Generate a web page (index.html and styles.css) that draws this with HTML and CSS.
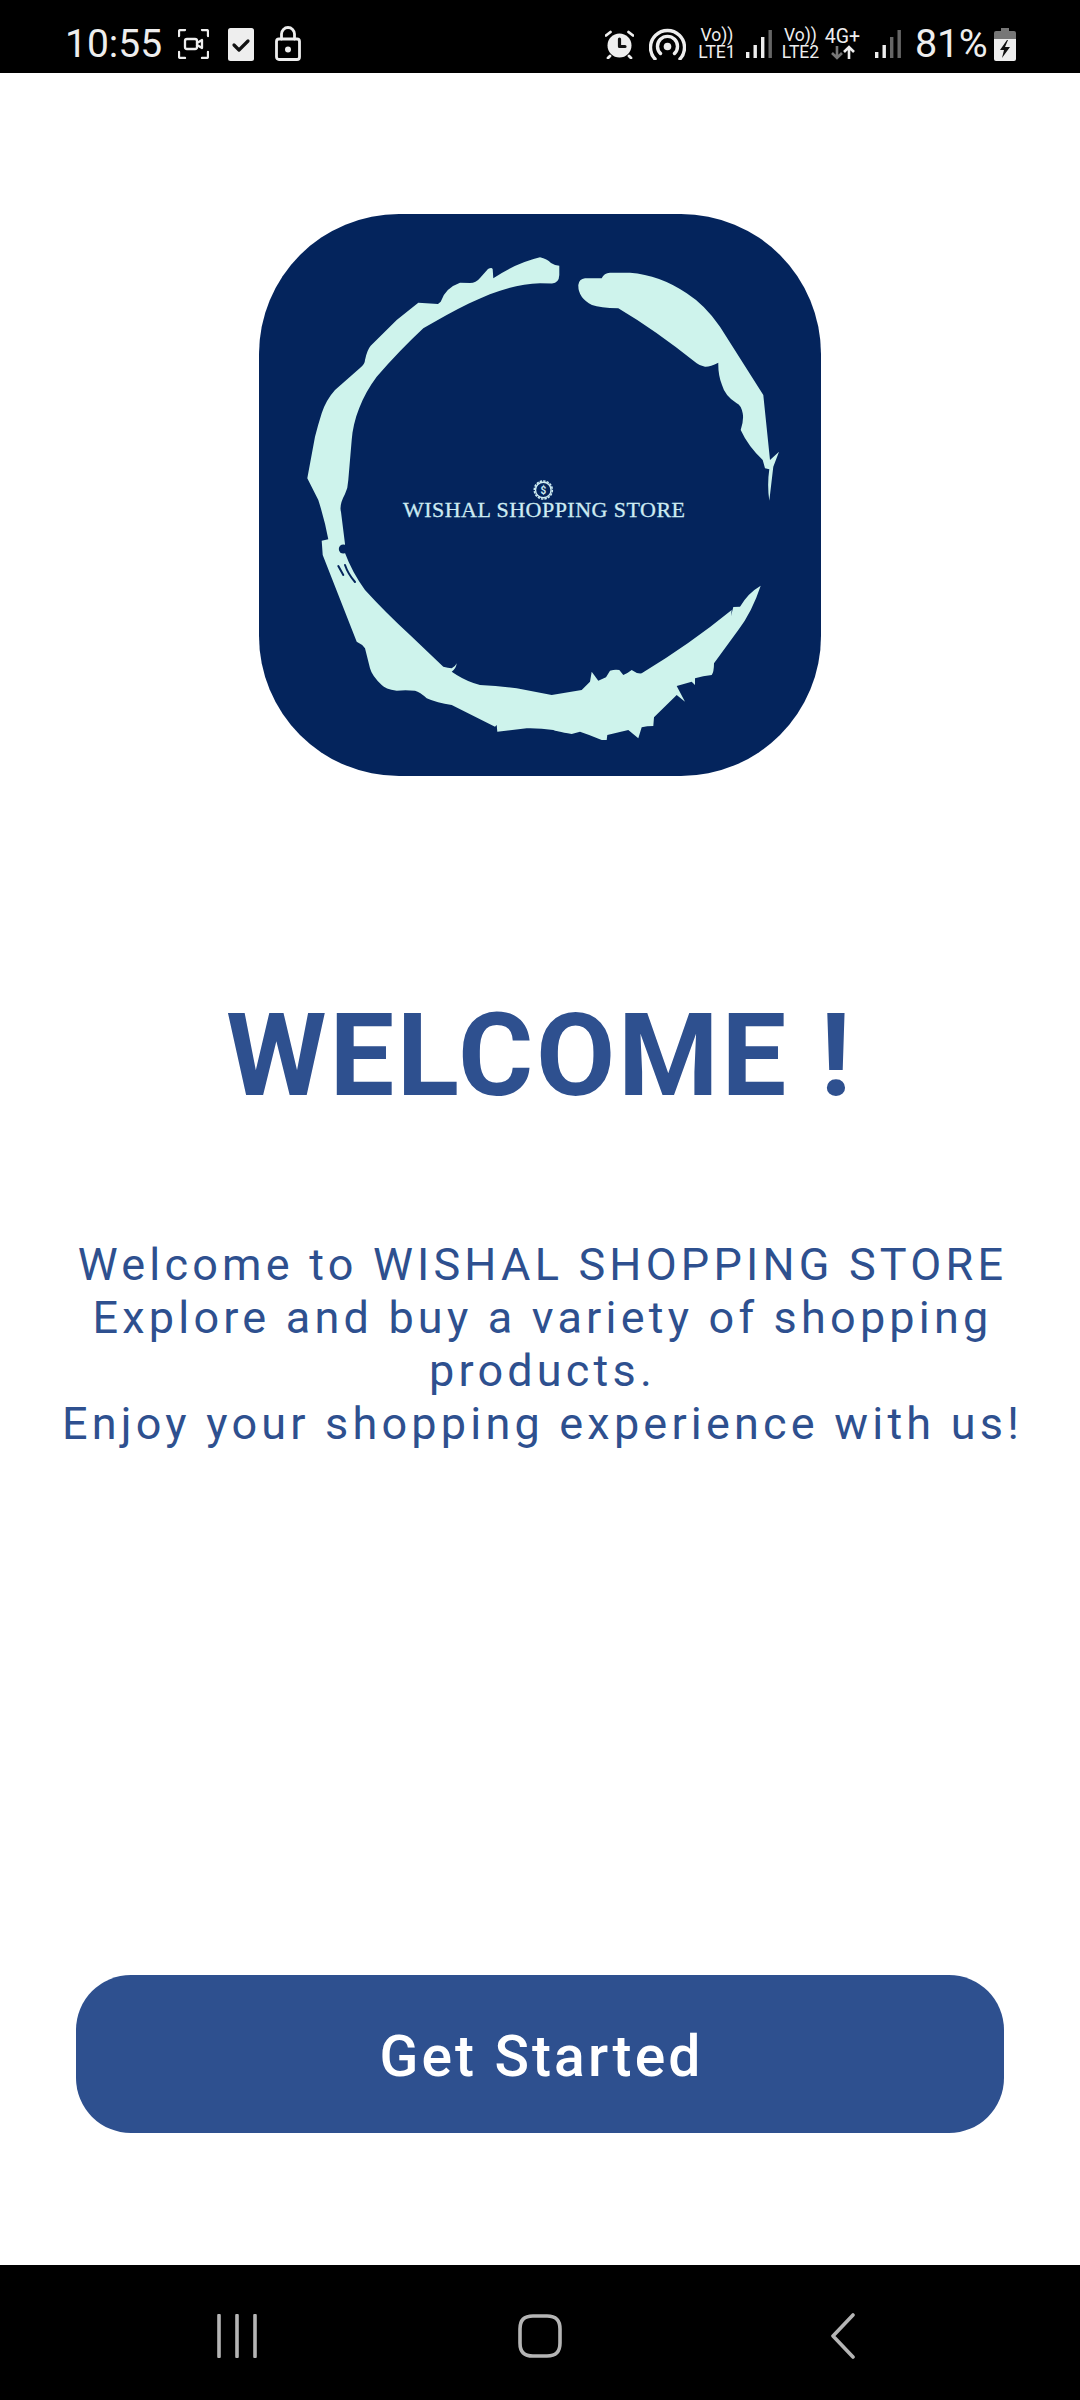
FILE: index.html
```html
<!DOCTYPE html>
<html lang="en">
<head>
<meta charset="utf-8">
<title>Wishal Shopping Store</title>
<link rel="stylesheet" href="styles.css">
</head>
<body>
<div class="screen">
  <header class="status">
    <span class="time">10:55</span>
    <svg class="ic ic-capture" viewBox="0 0 31 30"><path d="M1 7V2.500Q1 1 2.500 1H7M24 1h4.500Q30 1 30 2.500V7M30 23v4.500Q30 29 28.500 29H24M7 29H2.500Q1 29 1 27.500V23" /><rect x="7" y="10" width="12" height="10" rx="2"/><path d="M19 14l5-3v8l-5-3"/></svg>
    <svg class="ic ic-check" viewBox="0 0 26 33"><rect class="fill" width="26" height="33" rx="2.500"/><path class="dark" d="M6 17l5 5 9-9"/></svg>
    <svg class="ic ic-lock" viewBox="0 0 26 35"><rect x="1.500" y="13" width="23" height="20.500" rx="2.500"/><path d="M6.500 13V8a6.500 6.500 0 0 1 13 0v5"/><circle class="fill" cx="13" cy="23.500" r="3"/></svg>
    <svg class="ic ic-alarm" viewBox="0 0 29 29"><circle class="fill" cx="14.500" cy="15.500" r="12"/><path d="M1 5.500L5.500 2M28 5.500L23.500 2M5 26l-2 2M24 26l2 2"/><path class="dark" d="M14.500 9v7.500H20"/></svg>
    <svg class="ic ic-hotspot" viewBox="0 0 37 32"><path d="M6 31A17 17 0 1 1 31 31M11.500 25.500A10 10 0 1 1 25.500 25.500"/><circle class="fill" cx="18.500" cy="18.500" r="3.800"/></svg>
    <div class="net net-1"><span>Vo))</span><span>LTE1</span></div>
    <svg class="ic ic-signal sig-1" viewBox="0 0 27 29"><rect class="fill" x="1" y="22" width="3.400" height="6"/><rect class="fill" x="8.500" y="15" width="3.400" height="13"/><rect class="fill" x="16" y="7" width="3.400" height="21"/><rect class="dim" x="23.500" y="0" width="3.400" height="28"/></svg>
    <div class="net net-2"><span>Vo))</span><span>LTE2</span></div>
    <div class="net net-3"><span class="net-4g">4G+</span>
      <svg class="arrows" viewBox="0 0 30 15"><path class="down" d="M9 1v12M4 8l5 5 5-5"/><path class="up" d="M21 14V2M16 7l5-5 5 5"/></svg>
    </div>
    <svg class="ic ic-signal sig-2" viewBox="0 0 27 29"><rect class="fill" x="1" y="22" width="3.400" height="6"/><rect class="fill" x="8.500" y="15" width="3.400" height="13"/><rect class="dim" x="16" y="7" width="3.400" height="21"/><rect class="dim" x="23.500" y="0" width="3.400" height="28"/></svg>
    <span class="pct">81%</span>
    <svg class="ic ic-batt" viewBox="0 0 22 33"><path class="dim2" d="M7 0h8v3h5q2 0 2 2v7H0V5q0-2 2-2h5z"/><path class="fill" d="M0 11h22v20q0 2-2 2H2q-2 0-2-2z"/><path class="darkfill" d="M13 12L6 22h4l-2 8 8-11h-5l3-7z"/></svg>
  </header>

  <main class="main">
    <svg class="logo" viewBox="259 214 562 562">
      <rect class="logo-bg" x="259" y="214" width="562" height="562" rx="140"/>
      <path class="ring" d="M540 257.300Q547 259 551 263Q555 265.500 559.300 265.700L559.300 275Q559 283 552 283.400L540 283.300C505 284 468 302 423.300 328.300Q400 350 376.700 376.700C362 396 353 420 351.700 440L348.300 480Q348 488 345 494Q339 505 341 512L345 544L345 553Q352 572 365 590Q385 612 410 635L443.300 666.700Q448 668 451.700 668.300Q455 667 456.700 663.300Q456 669 451.700 671.700L456.700 675Q468 682 480 685Q500 686 516.700 688.300L551.700 695L581.700 690L590 681.700L591.700 671.700L598.300 680.700L606 677.300L610 670.700Q615 669 619.300 670L623.300 675Q628 673 631.700 670Q637 674 641.700 673.300Q690 644 731.700 610L731 616L733.300 607L740 606.700Q748 593 760.700 585.700Q752 612 738.300 630L714 663.300Q714 672 711.700 675Q703 676 695 678.300L695 685L691.700 681.700L676.700 686L685 701.700L676.700 695L654 717.300L653.300 726Q647 726 641.700 727.300L638.300 738.300L628.300 730L607.300 735L606.700 740L601.700 740Q590 735 580 731.700L571.700 734Q555 731 553.300 730Q540 728 526.700 728.300L497.300 731.700L496.700 725L495 726.700L451.700 705Q437 703 426.700 698.300Q420 692 415 690.700Q405 690 396.700 690.700Q385 689 381.700 685Q372 676 370 668.300L365 648.300Q362 644 356.700 641.700L322.700 555L321.700 540.700L328.300 539.300Q325 521 318.300 500L307.300 478.300L315 436.700Q318 425 321.700 413.300Q326 400 335 390L360 368Q365 364 365 360Q367 350 370.700 345.700L396.700 320L418.300 302.700L438 304L440.700 301.700Q445 288 460 282.700L470 283Q476 283 480 278L488 269Q492 267 492.700 269.300L493.300 278.300Q516 263 540 257.300Z"/>
      <path class="ring" d="M578.300 285Q579 279 585 278.300L601.700 278.300Q604 273 610 272.700L630 272.700Q660 275 686.700 293.300Q705 305 720 326.700L763.300 395L770 460L779 451.700L773.300 466.700L769.300 500.700Q767 485 769.300 469.300L765 468.300L762.700 460Q748 446 740.700 430Q744 420 742.700 413.300Q741 405 736.700 403.300Q725 396 722 385Q718 375 718.300 362.700Q710 367 705 366.700Q700 366 696.700 363.300Q655 330 618.300 308.300Q600 308 592 305Q578 298 578.300 285Z"/>
      <circle class="logo-bg" cx="343.300" cy="549" r="4.500"/>
      <path class="nick" d="M338.300 566l5 9M345 565q3 9 10 17"/>
      <circle class="coin-edge" cx="543.300" cy="490" r="9"/>
      <circle class="coin" cx="543.300" cy="490" r="7.800"/>
      <text class="coin-t" x="543.300" y="493.500">$</text>
      <text class="logo-t" x="544" y="517" textLength="282">WISHAL SHOPPING STORE</text>
    </svg>

    <h1 class="title">WELCOME !</h1>

    <p class="intro">Welcome to WISHAL SHOPPING STORE<br>Explore and buy a variety of shopping products.<br>Enjoy your shopping experience with us!</p>

    <button class="cta" type="button">Get Started</button>
  </main>

  <nav class="nav">
    <svg class="nav-recent" viewBox="0 0 40 44"><path d="M2 1.500v41M20 1.500v41M38 1.500v41"/></svg>
    <svg class="nav-home" viewBox="0 0 44 44"><path d="M15 2h14c9 0 13 4 13 13v14c0 9-4 13-13 13H15C6 42 2 38 2 29V15C2 6 6 2 15 2z"/></svg>
    <svg class="nav-back" viewBox="0 0 24 46"><path d="M22 2L2 23l20 21"/></svg>
  </nav>
</div>
</body>
</html>
```
FILE: styles.css
```css
* { box-sizing: border-box; }
html, body { margin: 0; padding: 0; background: #fff; }
body { font-family: Roboto, "Noto Sans", sans-serif; }

.screen { width: 1080px; height: 2400px; display: flex; flex-direction: column; overflow: hidden; }

/* status bar */
.status { height: 73px; flex: none; background: #000; color: #eee; display: flex; align-items: center; padding: 15px 64px 0 65px; }
.time { font-size: 39px; line-height: 44px; width: 97px; }
.pct { font-size: 39.500px; line-height: 44px; width: 72px; margin-left: 14px; white-space: nowrap; letter-spacing: -.3px; }
.ic { display: block; flex: none; fill: none; stroke: #eee; stroke-width: 2.800; stroke-linecap: round; stroke-linejoin: round; }
.ic .fill { fill: #eee; stroke: none; }
.ic .dim { fill: #666; stroke: none; }
.ic .dim2 { fill: #777; stroke: none; }
.ic .dark { stroke: #111; stroke-width: 3.200; }
.ic .darkfill { fill: #111; stroke: none; }
.ic-capture { width: 31px; height: 30px; margin-left: 16px; stroke-width: 2.300; }
.ic-check { width: 26px; height: 33px; margin-left: 19px; }
.ic-lock { width: 26px; height: 35px; margin-left: 21px; margin-top: -2px; }
.ic-alarm { width: 29px; height: 29px; margin-left: auto; }
.ic-hotspot { width: 37px; height: 32px; margin-left: 15px; stroke-width: 3.400; }
.ic-signal { width: 27px; height: 29px; }
.sig-1 { margin-left: 9px; }
.sig-2 { margin-left: 13px; }
.ic-batt { width: 22px; height: 33px; margin-left: 7px; }

.net { display: flex; flex-direction: column; align-items: center; font-size: 17.500px; line-height: 17px; color: #eee; flex: none; white-space: nowrap; }
.net-1 { width: 38px; margin-left: 12px; }
.net-2 { width: 39px; margin-left: 9px; }
.net-3 { width: 37px; margin-left: 4px; }
.net-4g { font-size: 19.500px; }
.arrows { width: 30px; height: 15px; display: block; fill: none; stroke-width: 2.600; }
.arrows .down { stroke: #777; }
.arrows .up { stroke: #eee; }

/* content */
.main { flex: 1; display: flex; flex-direction: column; align-items: center; padding-top: 141px; background: #fff; }
.logo { width: 562px; height: 562px; display: block; flex: none; }
.logo-bg { fill: #04245c; }
.ring { fill: #cef3ec; }
.nick { fill: none; stroke: #04245c; stroke-width: 2; stroke-linecap: round; }
.coin-edge { fill: none; stroke: #cdebf2; stroke-width: 1.600; stroke-dasharray: 2.400 1.100; }
.coin { fill: none; stroke: #cdebf2; stroke-width: 1.400; }
.coin-t { font-family: Roboto, sans-serif; font-size: 10px; font-weight: 700; fill: #cdebf2; text-anchor: middle; }
.logo-t { font-family: "Liberation Serif", serif; font-size: 22px; fill: #cdebf2; stroke: #cdebf2; stroke-width: .3; text-anchor: middle; }

.title { margin: 214px 0 0; font-size: 115px; line-height: 132px; font-weight: 700; color: #2e508f; letter-spacing: 2.700px; text-align: center; }
.intro { margin: 116px 0 0 5px; width: 1000px; font-size: 45px; line-height: 53px; color: #2e508f; letter-spacing: 4.200px; text-align: center; }
.cta { margin-top: auto; margin-bottom: 132px; width: 928px; height: 158px; border: 0; border-radius: 55px; background: #2e508f; color: #fff; font-family: Roboto, sans-serif; font-size: 57px; font-weight: 500; letter-spacing: 3.100px; padding: 5px 0 0 3px; }

/* nav bar */
.nav { height: 135px; flex: none; background: #000; display: flex; align-items: center; padding: 7px 0 0 217px; }
.nav svg { fill: none; stroke: #b5b5b5; stroke-width: 3.600; stroke-linecap: round; stroke-linejoin: round; display: block; flex: none; }
.nav-recent { width: 40px; height: 44px; }
.nav-home { width: 44px; height: 44px; margin-left: 261px; }
.nav-back { width: 24px; height: 46px; margin-left: 269px; }
```
